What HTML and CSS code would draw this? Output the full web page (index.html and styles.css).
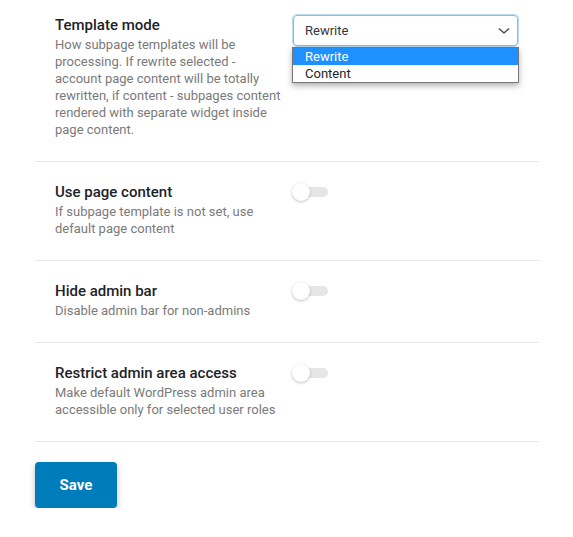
FILE: index.html
```html
<!DOCTYPE html>
<html lang="en">
  <head>
    <meta charset="UTF-8" />
    <title>Account Settings</title>
    <link rel="stylesheet" href="styles.css">
  </head>
  <body>
    <div class="settings">
      <div class="setting">
        <div class="setting-label">
          <div class="setting-title">Template mode</div>
          <div class="setting-desc">How subpage templates will be processing. If rewrite selected - account page content will be totally rewritten, if content - subpages content rendered with separate widget inside page content.</div>
        </div>
        <div class="setting-control">
          <div class="select">
            <span>Rewrite</span>
            <svg class="chevron" width="12" height="8" viewBox="0 0 12 8">
              <path d="M1 1.5 L6 6 L11 1.5" fill="none" stroke="#555" stroke-width="1.6" />
            </svg>
            <ul class="select-list">
              <li class="active">Rewrite</li>
              <li>Content</li>
            </ul>
          </div>
        </div>
      </div>

      <div class="setting">
        <div class="setting-label">
          <div class="setting-title">Use page content</div>
          <div class="setting-desc">If subpage template is not set, use default page content</div>
        </div>
        <div class="setting-control">
          <span class="toggle"><span class="knob"></span></span>
        </div>
      </div>

      <div class="setting">
        <div class="setting-label">
          <div class="setting-title">Hide admin bar</div>
          <div class="setting-desc">Disable admin bar for non-admins</div>
        </div>
        <div class="setting-control">
          <span class="toggle"><span class="knob"></span></span>
        </div>
      </div>

      <div class="setting">
        <div class="setting-label">
          <div class="setting-title">Restrict admin area access</div>
          <div class="setting-desc">Make default WordPress admin area accessible only for selected user roles</div>
        </div>
        <div class="setting-control">
          <span class="toggle"><span class="knob"></span></span>
        </div>
      </div>

      <button class="save">Save</button>
    </div>
  </body>
</html>
```

FILE: styles.css
```css
body {
  margin: 0;
  font-family: Roboto, "Liberation Sans", sans-serif;
  background: #fff;
}

.settings {
  margin-left: 35px;
  width: 504px;
}

.setting {
  display: grid;
  grid-template-columns: 230px 1fr;
  column-gap: 7px;
  padding: 20px 21px 23px 20px;
  border-bottom: 1px solid #e8e8e8;
}

.setting:first-child {
  padding-top: 15px;
}

.setting-title {
  font-size: 15px;
  font-weight: 500;
  line-height: 20px;
  color: #1d2327;
  margin-bottom: 1px;
}

.setting-desc {
  font-size: 13px;
  line-height: 17px;
  color: #7a7a7a;
}

.select {
  position: relative;
  display: flex;
  align-items: center;
  justify-content: space-between;
  height: 29px;
  margin-left: 1px;
  padding: 0 6px 0 11px;
  border: 1px solid #86bde0;
  border-radius: 4px;
  box-shadow: 0 0 0 1px #b9dbef;
  font-size: 13px;
  color: #32373c;
}

.chevron {
  margin-right: 1px;
}

.select-list {
  position: absolute;
  top: 31px;
  left: -2px;
  right: -2px;
  margin: 0;
  padding: 0;
  list-style: none;
  background: #fff;
  border: 1px solid #767676;
  box-shadow: 0 3px 6px rgba(0, 0, 0, 0.3);
  z-index: 2;
}

.select-list li {
  height: 17px;
  line-height: 17px;
  padding-left: 12px;
  font-size: 13px;
  color: #1d2327;
}

.select-list li.active {
  background: #1e90ff;
  color: #fff;
}

.toggle {
  position: relative;
  display: block;
  width: 36px;
  height: 18px;
  margin-top: 1px;
}

.toggle::before {
  content: "";
  position: absolute;
  left: 10px;
  top: 4px;
  width: 26px;
  height: 10px;
  border-radius: 5px;
  background: #e6e6e6;
}

.knob {
  position: absolute;
  left: 0;
  top: 0;
  width: 18px;
  height: 18px;
  border-radius: 50%;
  background: #fff;
  box-shadow: 0 1px 3px rgba(0, 0, 0, 0.25);
}

.save {
  margin-top: 20px;
  width: 82px;
  height: 46px;
  border: none;
  border-radius: 4px;
  background: #007cba;
  color: #fff;
  font-family: Roboto, "Liberation Sans", sans-serif;
  font-size: 15px;
  font-weight: 700;
  box-shadow: 0 3px 6px rgba(0, 0, 0, 0.25);
  cursor: pointer;
}
```
